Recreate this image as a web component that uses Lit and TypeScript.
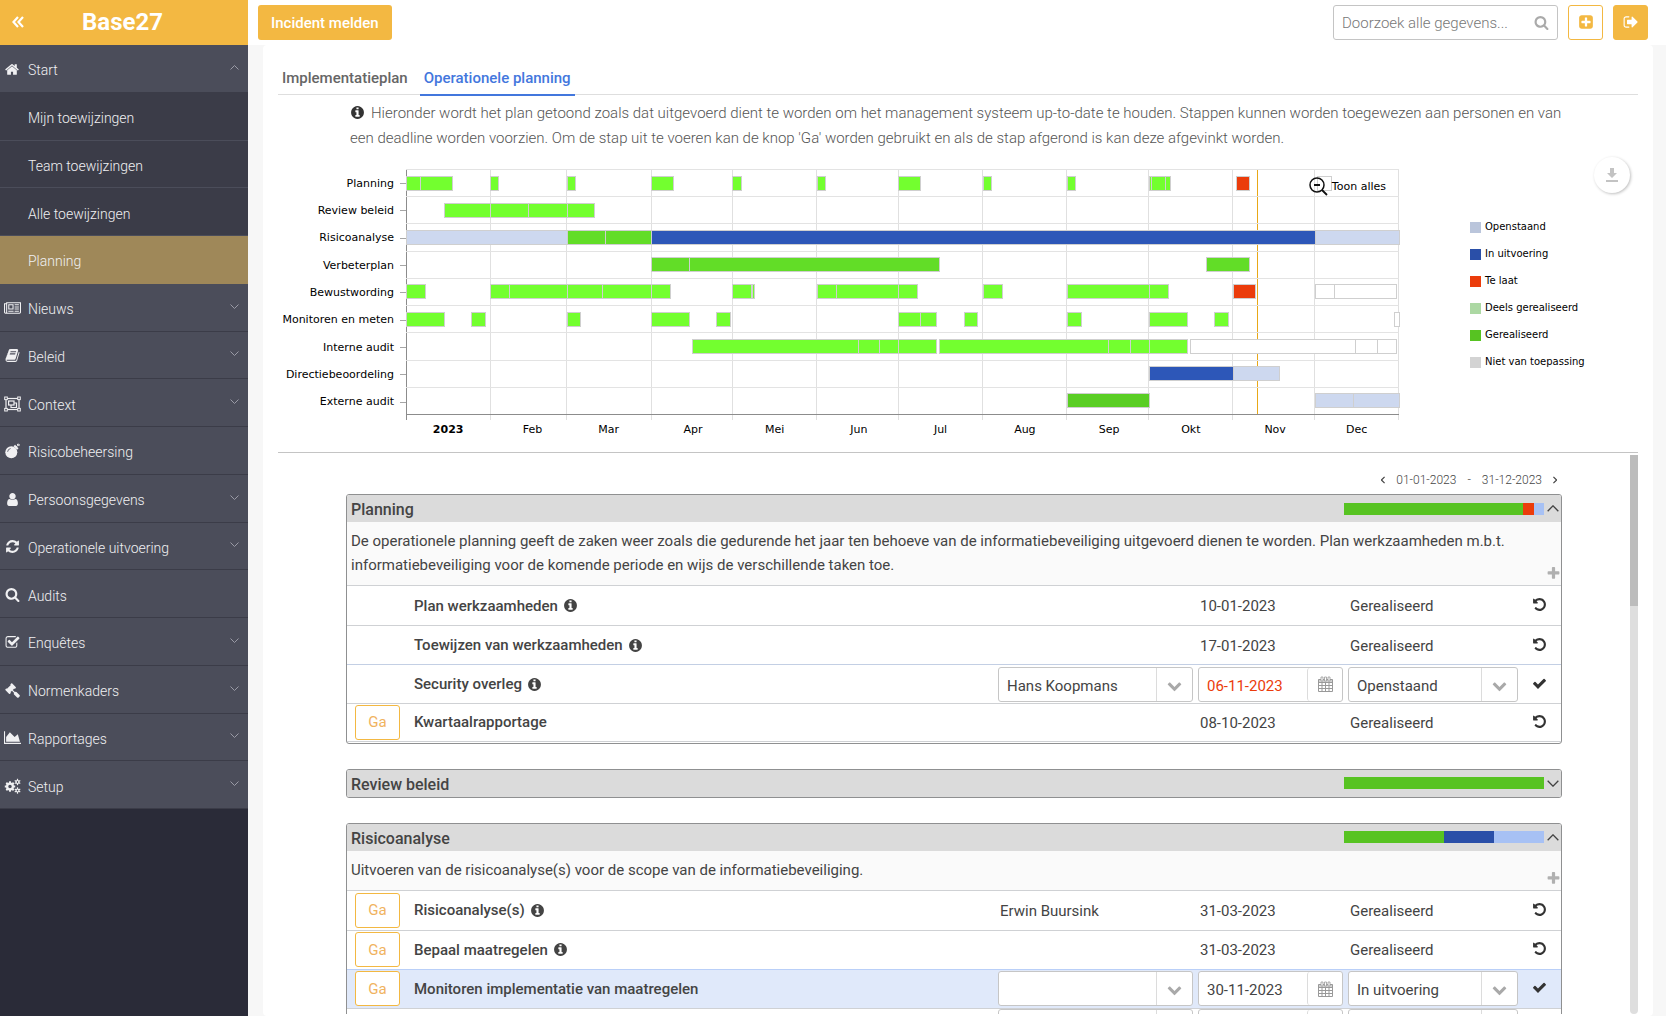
import { LitElement, html, css, svg, nothing } from "lit";
import { customElement, property } from "lit/decorators.js";
import { classMap } from "lit/directives/class-map.js";

/* ---------- icons: [viewBox width, path] on a 1792 high grid ---------- */
const ICONS: Record<string, [number, string]> = {
  home: [1664, "M1408 992v480q0 26-19 45t-45 19h-384v-384h-256v384h-384q-26 0-45-19t-19-45v-480q0-1 .5-3t.5-3l575-474 575 474q1 2 1 6zm223-69l-62 74q-8 9-21 11h-3q-13 0-21-7l-692-577-692 577q-12 8-24 7-13-2-21-11l-62-74q-8-10-7-23.5t11-21.5l719-599q32-26 76-26t76 26l244 204v-195q0-14 9-23t23-9h192q14 0 23 9t9 23v408l219 182q10 8 11 21.5t-7 23.5z"],
  news: [2048, "M1024 512h-384v384h384v-384zm128 640v128h-640v-128h640zm0-768v640h-640v-640h640zm640 768v128h-512v-128h512zm0-256v128h-512v-128h512zm0-256v128h-512v-128h512zm0-256v128h-512v-128h512zm-1536 960v-960h-128v960q0 26 19 45t45 19 45-19 19-45zm1664 0v-1088h-1536v1088q0 33-11 64h1483q26 0 45-19t19-45zm128-1216v1216q0 80-56 136t-136 56h-1664q-80 0-136-56t-56-136v-1088h256v-128h1792z"],
  book: [1792, "M1703 478q40 57 18 129l-275 906q-19 64-76.5 107.5t-122.5 43.5h-923q-77 0-148.5-53.5t-99.5-131.5q-24-67-2-127 0-4 3-27t4-37q1-8-3-21.5t-3-19.5q2-11 8-21t16.5-23.5 16.5-23.5q23-38 45-91.5t30-91.5q3-10 .5-30t-.5-28q3-11 17-28t17-23q21-36 42-92t25-90q1-9-2.5-32t.5-28q4-13 22-30.5t22-22.5q19-26 42.5-84.5t27.5-96.5q1-8-3-25.5t-2-26.5q2-8 9-18t18-23 17-21q8-12 16.5-30.5t15-35 16-36 19.5-32 26.5-23.5 36-11.5 47.5 5.5l-1 3q38-9 51-9h761q74 0 114 56t18 130l-274 906q-36 119-71.5 153.5t-128.5 34.5h-869q-27 0-38 15-11 16-1 43 24 70 144 70h923q29 0 56-15.5t35-41.5l300-987q7-22 5-57 38 15 59 43zm-1064 2q-4 13 2 22.5t20 9.5h608q13 0 25.5-9.5t16.5-22.5l21-64q4-13-2-22.5t-20-9.5h-608q-13 0-25.5 9.5t-16.5 22.5zm-83 256q-4 13 2 22.5t20 9.5h608q13 0 25.5-9.5t16.5-22.5l21-64q4-13-2-22.5t-20-9.5h-608q-13 0-25.5 9.5t-16.5 22.5z"],
  user: [1792, "M1536 1399q0 109-62.5 187t-150.5 78h-854q-88 0-150.5-78t-62.5-187q0-85 8.5-160.5t31.5-152 58.5-131 94-89 134.5-34.5q131 128 313 128t313-128q76 0 134.5 34.5t94 89 58.5 131 31.5 152 8.5 160.5zm-256-887q0 159-112.5 271.5t-271.5 112.5-271.5-112.5-112.5-271.5 112.5-271.5 271.5-112.5 271.5 112.5 112.5 271.5z"],
  refresh: [1792, "M1639 1056q0 5-1 7-64 268-268 434.5t-478 166.5q-146 0-282.5-55t-243.5-157l-129 129q-19 19-45 19t-45-19-19-45v-448q0-26 19-45t45-19h448q26 0 45 19t19 45-19 45l-137 137q71 66 161 102t187 36q134 0 250-65t186-179q11-17 53-117 8-23 30-23h192q13 0 22.5 9.5t9.5 22.5zm25-800v448q0 26-19 45t-45 19h-448q-26 0-45-19t-19-45 19-45l138-138q-148-137-349-137-134 0-250 65t-186 179q-11 17-53 117-8 23-30 23h-199q-13 0-22.5-9.5t-9.5-22.5v-7q65-268 270-434.5t480-166.5q146 0 284 55.5t245 156.5l130-129q19-19 45-19t45 19 19 45z"],
  search: [1792, "M1216 832q0-185-131.5-316.5t-316.5-131.5-316.5 131.5-131.5 316.5 131.5 316.5 316.5 131.5 316.5-131.5 131.5-316.5zm512 832q0 52-38 90t-90 38q-54 0-90-38l-343-342q-179 124-399 124-143 0-273.5-55.5t-225-150-150-225-55.5-273.5 55.5-273.5 150-225 225-150 273.5-55.5 273.5 55.5 225 150 150 225 55.5 273.5q0 220-124 399l343 343q37 37 37 90z"],
  survey: [1792, "M1472 930v318q0 119-84.5 203.5t-203.5 84.5h-832q-119 0-203.5-84.5t-84.5-203.5v-832q0-119 84.5-203.5t203.5-84.5h832q63 0 117 25 15 7 18 23 3 17-9 29l-49 49q-10 10-23 10-3 0-9-2-23-6-45-6h-832q-66 0-113 47t-47 113v832q0 66 47 113t113 47h832q66 0 113-47t47-113v-254q0-13 9-22l64-64q10-10 23-10 6 0 12 3 20 8 20 29zm231-489l-814 814q-24 24-57 24t-57-24l-430-430q-24-24-24-57t24-57l110-110q24-24 57-24t57 24l263 263 647-647q24-24 57-24t57 24l110 110q24 24 24 57t-24 57z"],
  gavel: [1792, "M1771 1536q0 53-37 90l-107 108q-39 37-91 37-53 0-90-37l-363-364q-38-36-38-90 0-53 43-96l-256-256-126 126q-14 14-34 14t-34-14q2 2 12.5 12t12.5 13 10 11.5 10 13.5 6 13.5 5.5 16.5 1.5 18q0 38-28 68-3 3-16.5 18t-19 20.5-18.5 16.5-22 15.5-22 9-26 4.5q-40 0-68-28l-408-408q-28-28-28-68 0-13 4.5-26t9-22 15.5-22 16.5-18.5 20.5-19 18-16.5q30-28 68-28 10 0 18 1.5t16.5 5.5 13.5 6 13.5 10 11.5 10 13 12.5 12 12.5q-14-14-14-34t14-34l348-348q14-14 34-14t34 14q-2-2-12.5-12t-12.5-13-10-11.5-10-13.5-6-13.5-5.5-16.5-1.5-18q0-38 28-68 3-3 16.5-18t19-20.5 18.5-16.5 22-15.5 22-9 26-4.5q40 0 68 28l408 408q28 28 28 68 0 13-4.5 26t-9 22-15.5 22-16.5 18.5-20.5 19-18 16.5q-30 28-68 28-10 0-18-1.5t-16.5-5.5-13.5-6-13.5-10-11.5-10-13-12.5-12-12.5q14 14 14 34t-14 34l-126 126 256 256q43-43 96-43 52 0 91 37l363 363q37 39 37 91z"],
  area: [2048, "M2048 1536v128h-2048v-1536h128v1408h1920zm-384-1024l256 896h-1664v-576l448-576 576 576z"],
  info: [1792, "M1152 1376v-160q0-14-9-23t-23-9h-96v-512q0-14-9-23t-23-9h-320q-14 0-23 9t-9 23v160q0 14 9 23t23 9h96v320h-96q-14 0-23 9t-9 23v160q0 14 9 23t23 9h448q14 0 23-9t9-23zm-128-896v-160q0-14-9-23t-23-9h-192q-14 0-23 9t-9 23v160q0 14 9 23t23 9h192q14 0 23-9t9-23zm640 416q0 209-103 385.5t-279.5 279.5-385.5 103-385.5-103-279.5-279.5-103-385.5 103-385.5 279.5-279.5 385.5-103 385.5 103 279.5 279.5 103 385.5z"],
  plusSquare: [1792, "M1408 960v-128q0-26-19-45t-45-19h-320v-320q0-26-19-45t-45-19h-128q-26 0-45 19t-19 45v320h-320q-26 0-45 19t-19 45v128q0 26 19 45t45 19h320v320q0 26 19 45t45 19h128q26 0 45-19t19-45v-320h320q26 0 45-19t19-45zm256-544v960q0 119-84.5 203.5t-203.5 84.5h-960q-119 0-203.5-84.5t-84.5-203.5v-960q0-119 84.5-203.5t203.5-84.5h960q119 0 203.5 84.5t84.5 203.5z"],
  signOut: [1792, "M704 1440q0 4 1 20t.5 26.5-3 23.5-10 19.5-20.5 6.5h-320q-119 0-203.5-84.5t-84.5-203.5v-704q0-119 84.5-203.5t203.5-84.5h320q13 0 22.5 9.5t9.5 22.5q0 4 1 20t.5 26.5-3 23.5-10 19.5-20.5 6.5h-320q-66 0-113 47t-47 113v704q0 66 47 113t113 47h312l11.5 1 11.5 3 8 5.5 7 9 2 13.5zm928-544q0 26-19 45l-544 544q-19 19-45 19t-45-19-19-45v-288h-448q-26 0-45-19t-19-45v-384q0-26 19-45t45-19h448v-288q0-26 19-45t45-19 45 19l544 544q19 19 19 45z"],
  plus: [1792, "M1600 736v192q0 40-28 68t-68 28h-416v416q0 40-28 68t-68 28h-192q-40 0-68-28t-28-68v-416h-416q-40 0-68-28t-28-68v-192q0-40 28-68t68-28h416v-416q0-40 28-68t68-28h192q40 0 68 28t28 68v416h416q40 0 68 28t28 68z"],
  check: [1792, "M1671 566q0 40-28 68l-724 724-136 136q-28 28-68 28t-68-28l-136-136-362-362q-28-28-28-68t28-68l136-136q28-28 68-28t68 28l294 295 656-657q28-28 68-28t68 28l136 136q28 28 28 68z"],
  chevron: [1792, "M1683 808l-742 741q-19 19-45 19t-45-19l-742-741q-19-19-19-45.5t19-45.5l166-165q19-19 45-19t45 19l531 531 531-531q19-19 45-19t45 19l166 165q19 19 19 45.5t-19 45.5z"],
  undo: [1792, "M1664 896q0 156-61 298t-164 245-245 164-298 61q-172 0-327-72.5t-264-204.5q-7-10-6.5-22.5t8.5-20.5l137-138q10-9 25-9 16 2 23 12 73 95 179 147t225 52q104 0 198.5-40.5t163.5-109.5 109.5-163.5 40.5-198.5-40.5-198.5-109.5-163.5-163.5-109.5-198.5-40.5q-98 0-188 35.5t-160 101.5l137 138q31 30 14 69-17 40-59 40h-448q-26 0-45-19t-19-45v-448q0-42 40-59 39-17 69 14l130 129q107-101 244.5-156.5t284.5-55.5q156 0 298 61t245 164 164 245 61 298z"],
};

const gear = (cx: number, cy: number, r: number, teeth: number, tooth: number) => svg`
  ${Array.from({ length: teeth }, (_, i) => svg`<rect x=${cx - tooth / 2} y=${cy - r - 1.2} width=${tooth} height="2" fill="currentColor" transform="rotate(${(360 / teeth) * i} ${cx} ${cy})"></rect>`)}
  <circle cx=${cx} cy=${cy} r=${r * 0.72} fill="none" stroke="currentColor" stroke-width=${r * 0.56}></circle>`;

const DRAWN: Record<string, unknown> = {
  group: svg`<g fill="none" stroke="currentColor" stroke-width="1.200"><rect x="2" y="2.500" width="13" height="11"></rect><rect x="4.600" y="5" width="5.400" height="4"></rect><path d="M10 7h2.500v4.500H7V9"></path></g>
    <g fill="#4b4d5a" stroke="currentColor" stroke-width="1"><rect x=".7" y="1" width="2.600" height="2.600"></rect><rect x="13.700" y="1" width="2.600" height="2.600"></rect><rect x=".7" y="12.400" width="2.600" height="2.600"></rect><rect x="13.700" y="12.400" width="2.600" height="2.600"></rect></g>`,
  bomb: svg`<circle cx="7.300" cy="9.200" r="6" fill="currentColor"></circle><path d="M9.500 3.200l3.600 3.600 1.400-1.600-3.400-3.400z" fill="currentColor"></path><path d="M12 4.400l1.800-2.200M14.200.6v1.600M15.600 2.600h-1.400M13 1l1 1M15.600 1.200l-1 1" stroke="currentColor" stroke-width=".9" fill="none"></path><path d="M3.600 8.800a3.800 3.800 0 0 1 3-3.300" stroke="#4b4d5a" stroke-width=".8" fill="none"></path>`,
  cogs: svg`${gear(6, 8.5, 4, 8, 2)}${gear(13.5, 4, 2, 6, 1.2)}${gear(13.5, 12.5, 2, 6, 1.2)}`,
  calendar: svg`<g fill="none" stroke="currentColor" stroke-width="1"><path d="M1.500 3.500h14v12h-14zM1.500 6.500h14M1.500 9.500h14M1.500 12.500h14M5 6.500v9M8.500 6.500v9M12 6.500v9"></path></g><path d="M1.500 3.500h14v2.500h-14z" fill="currentColor" opacity=".45"></path><path d="M4 1h2v4H4zM7.500 1h2v4h-2zM11 1h2v4h-2z" fill="#fff" stroke="currentColor" stroke-width=".8"></path>`,
};

const icon = (name: string, size = 15) => {
  if (DRAWN[name]) {
    return html`<svg class="icon" width="17" height="16" viewBox="0 0 17 16" aria-hidden="true">${DRAWN[name]}</svg>`;
  }
  const [w, d] = ICONS[name];
  return html`<svg class="icon" width=${Math.round((size * w) / 1792)} height=${size} viewBox="0 0 ${w} 1792" aria-hidden="true"><path fill="currentColor" d=${d}></path></svg>`;
};

const caret = (dir: "up" | "down" | "left" | "right", w: number, h: number, stroke: number) => {
  const d = { up: "M1 9L9 1L17 9", down: "M1 1L9 9L17 1", left: "M9 1L1 9L9 17", right: "M1 1L9 9L1 17" }[dir];
  const flat = dir === "up" || dir === "down";
  return html`<svg class="icon" width=${w} height=${h} viewBox=${flat ? "0 0 18 10" : "0 0 10 18"} aria-hidden="true"><path d=${d} fill="none" stroke="currentColor" stroke-width=${stroke}></path></svg>`;
};

const shared = css`
  *, *::before, *::after { box-sizing: border-box; }
  button, input, select { font: inherit; color: inherit; margin: 0; padding: 0; border: 0; background: none; }
  button { cursor: pointer; }
  a { color: inherit; text-decoration: none; }
  .icon { display: block; flex: none; }
`;

/* ---------- data ---------- */
interface NavItem { label: string; icon?: string; arrow?: "up" | "down"; sub?: boolean; active?: boolean; }
const NAV: NavItem[] = [
  { label: "Start", icon: "home", arrow: "up" },
  { label: "Mijn toewijzingen", sub: true },
  { label: "Team toewijzingen", sub: true },
  { label: "Alle toewijzingen", sub: true },
  { label: "Planning", sub: true, active: true },
  { label: "Nieuws", icon: "news", arrow: "down" },
  { label: "Beleid", icon: "book", arrow: "down" },
  { label: "Context", icon: "group", arrow: "down" },
  { label: "Risicobeheersing", icon: "bomb" },
  { label: "Persoonsgegevens", icon: "user", arrow: "down" },
  { label: "Operationele uitvoering", icon: "refresh", arrow: "down" },
  { label: "Audits", icon: "search" },
  { label: "Enquêtes", icon: "survey", arrow: "down" },
  { label: "Normenkaders", icon: "gavel", arrow: "down" },
  { label: "Rapportages", icon: "area", arrow: "down" },
  { label: "Setup", icon: "cogs", arrow: "down" },
];

/* Bars are [first day, last day, kind], counted in days from 1 January. */
type Bar = [number, number, string];
const run = (kind: string, ...days: number[]): Bar[] => days.slice(1).map((d, i) => [days[i], d, kind] as Bar);
const CHART: { label: string; bars: Bar[] }[] = [
  { label: "Planning", bars: [...run("lime", 0, 5, 17), ...run("lime", 31, 34), ...run("lime", 59, 62), ...run("lime", 90, 98), ...run("lime", 120, 123), ...run("lime", 151, 154), ...run("lime", 181, 189), ...run("lime", 212, 215), ...run("lime", 243, 246), ...run("lime", 273, 274, 279, 281), ...run("late", 305, 310), ...run("empty", 335, 340)] },
  { label: "Review beleid", bars: run("lime", 14, 31, 45, 59, 69) },
  { label: "Risicoanalyse", bars: [...run("open", 0, 59), ...run("green", 59, 73, 90), ...run("busy", 90, 334), ...run("open", 334, 365)] },
  { label: "Verbeterplan", bars: [...run("green", 90, 104, 196), ...run("green", 294, 310)] },
  { label: "Bewustwording", bars: [...run("lime", 0, 7), ...run("lime", 31, 38, 59, 72, 90, 97), ...run("lime", 120, 127, 128), ...run("lime", 151, 158, 181, 188), ...run("lime", 212, 219), ...run("lime", 243, 273, 280), ...run("late", 304, 312), ...run("empty", 334, 341, 364)] },
  { label: "Monitoren en meten", bars: [...run("lime", 0, 14), ...run("lime", 24, 29), ...run("lime", 59, 64), ...run("lime", 90, 104), ...run("lime", 114, 119), ...run("lime", 181, 189, 195), ...run("lime", 205, 210), ...run("lime", 243, 248), ...run("lime", 273, 287), ...run("lime", 297, 302), ...run("empty", 363, 365)] },
  { label: "Interne audit", bars: [...run("lime", 105, 166, 174, 181, 195), ...run("lime", 196, 258, 266, 273, 287), ...run("empty", 288, 349, 357, 364)] },
  { label: "Directiebeoordeling", bars: [...run("busy", 273, 304), ...run("open", 304, 321)] },
  { label: "Externe audit", bars: [...run("done", 243, 273), ...run("open", 334, 348, 365)] },
];
const MONTHS: [string, number][] = [["2023", 31], ["Feb", 28], ["Mar", 31], ["Apr", 30], ["Mei", 31], ["Jun", 30], ["Jul", 31], ["Aug", 31], ["Sep", 30], ["Okt", 31], ["Nov", 30], ["Dec", 31]];
const LEGEND: [string, string][] = [["Openstaand", "l-open"], ["In uitvoering", "l-busy"], ["Te laat", "l-late"], ["Deels gerealiseerd", "l-part"], ["Gerealiseerd", "l-done"], ["Niet van toepassing", "l-none"]];
const pct = (days: number, of = 365) => `${(days / of) * 100}%`;

interface Task { title: string; go?: boolean; info?: boolean; who?: string; date: string; status: string; edit?: boolean; late?: boolean; tone?: string; }
interface Section { title: string; open: boolean; progress: [string, number][]; text?: string; tasks?: Task[]; }
const SECTIONS: Section[] = [
  {
    title: "Planning", open: true, progress: [["done", 179], ["late", 11], ["soft", 10]],
    text: "De operationele planning geeft de zaken weer zoals die gedurende het jaar ten behoeve van de informatiebeveiliging uitgevoerd dienen te worden. Plan werkzaamheden m.b.t. informatiebeveiliging voor de komende periode en wijs de verschillende taken toe.",
    tasks: [
      { title: "Plan werkzaamheden", info: true, date: "10-01-2023", status: "Gerealiseerd" },
      { title: "Toewijzen van werkzaamheden", info: true, date: "17-01-2023", status: "Gerealiseerd" },
      { title: "Security overleg", info: true, who: "Hans Koopmans", date: "06-11-2023", status: "Openstaand", edit: true, late: true, tone: "focus" },
      { title: "Kwartaalrapportage", go: true, date: "08-10-2023", status: "Gerealiseerd" },
    ],
  },
  { title: "Review beleid", open: false, progress: [["done", 200]] },
  {
    title: "Risicoanalyse", open: true, progress: [["done", 100], ["busy", 50], ["soft", 50]],
    text: "Uitvoeren van de risicoanalyse(s) voor de scope van de informatiebeveiliging.",
    tasks: [
      { title: "Risicoanalyse(s)", go: true, info: true, who: "Erwin Buursink", date: "31-03-2023", status: "Gerealiseerd" },
      { title: "Bepaal maatregelen", go: true, info: true, date: "31-03-2023", status: "Gerealiseerd" },
      { title: "Monitoren implementatie van maatregelen", go: true, date: "30-11-2023", status: "In uitvoering", edit: true, tone: "active" },
      { title: "", date: "", status: "", edit: true },
    ],
  },
];

/* ---------- sidebar ---------- */
@customElement("side-nav")
export class SideNav extends LitElement {
  static styles = [shared, css`
    :host { display: flex; flex-direction: column; background: #2a2b38; color: #f0f0f2; }
    .brand { height: 45px; display: flex; align-items: center; gap: 58px; padding: 0 12px 2px; background: #f3b842; color: #fff; }
    .brand button { width: 12px; display: flex; }
    .name { flex: none; font-size: 24px; line-height: 28px; font-weight: 700; margin: 0; }
    .list { list-style: none; margin: 0; padding: 0; display: grid; grid-auto-rows: 1fr; min-height: 764px; }
    .item { display: flex; background: #4b4d5a; border-bottom: 1px solid #3b3c48; }
    .item.sub { background: #3b3c48; border-bottom-color: #4b4d5a; }
    .item.active { background: #9f8859; border-bottom-color: #9f8859; }
    .link { flex: 1; display: grid; grid-template-columns: 24px 1fr 12px; gap: 4px; align-items: center; padding: 2px 8px 0 0; font-size: 14px; font-weight: 300; line-height: 20px; }
    .glyph { display: flex; justify-content: center; }
    .arrow { color: #9a9ba6; display: flex; justify-content: center; padding-bottom: 4px; }
    .text { padding-top: 2px; }
  `];
  render() {
    return html`
      <div class="brand">
        <button aria-label="Menu inklappen"><svg class="icon" width="12" height="12" viewBox="0 0 12 12"><path d="M6 1L1.500 6L6 11M11 1L6.500 6L11 11" fill="none" stroke="#fff" stroke-width="2.200"></path></svg></button>
        <h1 class="name">Base27</h1>
      </div>
      <nav aria-label="Hoofdmenu">
        <ul class="list">
          ${NAV.map((n) => html`<li class=${classMap({ item: true, sub: !!n.sub, active: !!n.active })}>
            <a class="link" href="#">
              <span class="glyph">${n.icon ? icon(n.icon, 15) : nothing}</span>
              <span class="text">${n.label}</span>
              <span class="arrow">${n.arrow ? caret(n.arrow, 9, 5, 2) : nothing}</span>
            </a></li>`)}
        </ul>
      </nav>`;
  }
}

/* ---------- year chart ---------- */
@customElement("year-chart")
export class YearChart extends LitElement {
  static styles = [shared, css`
    :host { display: grid; grid-template-columns: 1fr 71px 168px; font: 11px/14px Verdana, "DejaVu Sans", sans-serif; color: #000; }
    .chart { display: grid; grid-template-columns: 128px 1fr; }
    .labels, .rows { display: grid; grid-auto-rows: 1fr; height: 246px; }
    .label { display: flex; align-items: center; justify-content: flex-end; gap: 6px; padding-top: 2px; white-space: nowrap; }
    .label::after { content: ""; width: 6px; height: 1px; background: #a6a6a6; }
    .plot { position: relative; }
    .rows { position: relative; border-bottom: 1px solid #8c8c8c; }
    .row { position: relative; display: flex; align-items: center; border-top: 1px solid #e3e3e3; }
    .bar { position: absolute; height: 15px; border: 1px solid #cfcfcf; }
    .lime { background: #73ff2f; }
    .green { background: #62dd27; }
    .done { background: #5ace24; }
    .busy { background: #2d57b8; }
    .open { background: #cdd8ef; }
    .late { background: #eb3c0b; }
    .empty { background: #fff; }
    .grid { position: absolute; top: 0; left: 0; right: 0; height: 251px; display: flex; border-left: 1px solid #8c8c8c; }
    .month { border-right: 1px solid rgba(0, 0, 0, 0.12); }
    .today { position: absolute; top: 0; height: 245px; width: 1px; background: #e8a817; }
    .months { display: flex; padding-top: 8px; }
    .name { flex: none; }
    .name span { display: block; text-align: center; }
    .name:first-child { font-weight: 700; }
    .zoomout { position: absolute; top: 8px; right: 13px; display: flex; align-items: center; gap: 4px; }
    .side { display: flex; flex-direction: column; gap: 13px; margin: 51px 0 0; padding: 0; list-style: none; font-size: 10px; }
    .side li { display: flex; align-items: center; gap: 4px; line-height: 14px; }
    .swatch { width: 11px; height: 11px; }
    .l-open { background: #bac5db; }
    .l-busy { background: #2a4fa8; }
    .l-late { background: #eb3c0b; }
    .l-part { background: #acd8a3; }
    .l-done { background: #57c322; }
    .l-none { background: #d3d3d3; }
  `];
  render() {
    return html`
      <div class="chart">
        <div class="labels">${CHART.map((r) => html`<div class="label">${r.label}</div>`)}</div>
        <div class="plot">
          <div class="grid">${MONTHS.map(([, d]) => html`<div class="month" style="width:${pct(d)}"></div>`)}</div>
          <div class="today" style="left:${pct(312.8)}"></div>
          <div class="rows">${CHART.map((r) => html`<div class="row">${r.bars.map(([a, b, k]) => html`<div class="bar ${k}" style="left:${pct(a)};width:calc(${pct(b - a)} + 1px)"></div>`)}</div>`)}</div>
          <button class="zoomout"><svg class="icon" width="19" height="19" viewBox="0 0 19 19" aria-hidden="true"><circle cx="8" cy="8" r="7" fill="none" stroke="#111" stroke-width="1.500"></circle><path d="M5 8h6M13 13l5 5" stroke="#111" stroke-width="1.800" fill="none"></path></svg>Toon alles</button>
          <div class="months">${MONTHS.map(([m, d]) => html`<div class="name" style="width:${pct(d)}"><span style="width:${pct(31, d)}">${m}</span></div>`)}</div>
        </div>
      </div>
      <div></div>
      <ul class="side">${LEGEND.map(([t, c]) => html`<li><span class="swatch ${c}"></span>${t}</li>`)}</ul>`;
  }
}

/* ---------- one planning section ---------- */
@customElement("plan-section")
export class PlanSection extends LitElement {
  @property({ attribute: false }) data!: Section;
  static styles = [shared, css`
    :host { display: block; border: 1px solid #8f9091; border-radius: 3px; color: #444; font-size: 15px; line-height: 24px; overflow: hidden; }
    .head { height: 27px; display: flex; align-items: center; gap: 2px; padding: 0 1px 0 4px; background: #dbdbdb; }
    .title { flex: 1; margin: 0; padding-top: 2px; font-size: 16px; font-weight: 500; line-height: 25px; }
    .progress { width: 200px; height: 12px; display: flex; }
    .p-done { background: #57c322; }
    .p-late { background: #eb3c0b; }
    .p-busy { background: #2a4fa8; }
    .p-soft { background: #a7c1f4; }
    .toggle { width: 14px; height: 20px; display: flex; align-items: center; justify-content: center; }
    .intro { display: flex; justify-content: space-between; align-items: flex-end; background: #fafafa; padding: 7px 0 4px 4px; }
    .copy { margin: 0 30px 4px 0; }
    .add { color: #b0b0b0; display: flex; }
    .tasks { width: 100%; border-collapse: collapse; table-layout: fixed; }
    .tasks td { padding: 0; height: 39px; border-top: 1px solid #cfd1d4; vertical-align: middle; }
    .c-go { width: 67px; }
    .c-who { width: 200px; }
    .c-date { width: 150px; }
    .c-state { width: 176px; }
    .c-act { width: 37px; }
    .tasks tr:first-child td { height: 40px; }
    .tasks tr:last-child td { height: 37px; }
    .tasks .focus td { border-color: #c3cfe4; }
    .tasks .active td { background: #e0e9fa; border-color: #b9cff8; }
    .go { display: block; width: 45px; height: 35px; margin-left: 8px; border: 1px solid #f3b842; border-radius: 3px; background: #fff; color: #f0b35f; }
    .what { display: flex; align-items: center; gap: 5px; font-weight: 500; }
    .value { padding: 1px 0 0 2px; }
    .field { display: flex; position: relative; height: 35px; border: 1px solid #c6c6c6; border-radius: 3px; background: #fff; }
    .f-who { width: 195px; }
    .f-date { width: 145px; }
    .f-state { width: 170px; }
    .field select, .field input { flex: 1; min-width: 0; width: 100%; appearance: none; padding: 3px 0 0 8px; outline: none; }
    .field .late { color: #eb3c0b; }
    .drop { position: absolute; right: 0; top: 0; bottom: 0; width: 36px; border-left: 1px solid #dcdcdc; display: flex; align-items: center; justify-content: center; color: #a9a9a9; pointer-events: none; padding-top: 2px; }
    .pick { width: 35px; border-left: 1px solid #dcdcdc; display: flex; align-items: center; justify-content: center; color: #999; border-radius: 3px; }
    .act { display: flex; justify-content: center; width: 24px; margin-left: 3px; color: #333; padding-bottom: 2px; }
    .end { height: 2px; border-top: 1px solid #cfd1d4; }
  `];
  private row(t: Task) {
    return html`<tr class=${t.tone ?? ""}>
      <td>${t.go ? html`<button class="go">Ga</button>` : nothing}</td>
      <td><div class="what">${t.title}${t.info ? icon("info", 15) : nothing}</div></td>
      ${t.edit ? html`
        <td><div class="field f-who"><select aria-label="Toegewezen aan"><option>${t.who ?? ""}</option></select><span class="drop">${icon("chevron", 15)}</span></div></td>
        <td><div class="field f-date"><input class=${t.late ? "late" : ""} aria-label="Deadline" type="text" .value=${t.date}><button class="pick" aria-label="Kies datum">${icon("calendar")}</button></div></td>
        <td><div class="field f-state"><select aria-label="Status"><option>${t.status}</option></select><span class="drop">${icon("chevron", 15)}</span></div></td>
        <td><button class="act" aria-label="Afvinken">${icon("check", 15)}</button></td>` : html`
        <td><div class="value">${t.who ?? ""}</div></td>
        <td><div class="value">${t.date}</div></td>
        <td><div class="value">${t.status}</div></td>
        <td><button class="act" aria-label="Heropenen">${icon("undo", 15)}</button></td>`}
    </tr>`;
  }
  render() {
    const s = this.data;
    return html`
      <div class="head">
        <h2 class="title">${s.title}</h2>
        <div class="progress">${s.progress.map(([k, w]) => html`<span class="p-${k}" style="width:${w / 2}%"></span>`)}</div>
        <button class="toggle" aria-label="${s.title} in- of uitklappen">${caret(s.open ? "up" : "down", 12, 7, 2)}</button>
      </div>
      ${s.open ? html`
        <div class="intro"><p class="copy">${s.text}</p><button class="add" aria-label="Stap toevoegen">${icon("plus", 15)}</button></div>
        <table class="tasks">
          <colgroup><col class="c-go"><col><col class="c-who"><col class="c-date"><col class="c-state"><col class="c-act"></colgroup>
          <tbody>${s.tasks!.map((t) => this.row(t))}</tbody>
        </table>
        <div class="end"></div>` : nothing}`;
  }
}

/* ---------- page ---------- */
@customElement("app-root")
export class AppRoot extends LitElement {
  static styles = [shared, css`
    :host { display: grid; grid-template-columns: 248px minmax(0, 1fr); height: 100vh; overflow: hidden; background: #f7f7f7; font-family: Roboto, "Liberation Sans", sans-serif; font-size: 15px; color: #444; }
    .page { display: flex; flex-direction: column; min-height: 0; }
    .top { height: 45px; display: flex; align-items: center; gap: 10px; padding: 0 18px 0 10px; background: #fff; }
    .report { height: 35px; padding: 0 13px; border-radius: 3px; background: #f3b842; color: #fff; font-weight: 500; margin-right: auto; }
    .search { width: 225px; height: 35px; display: flex; align-items: center; border: 1px solid #c4c4c4; border-radius: 3px; padding: 0 8px; }
    .search input { flex: 1; min-width: 0; outline: none; font-weight: 300; }
    .search input::placeholder { color: #777; opacity: 1; }
    .search .icon { color: #aaa; }
    .tool { width: 35px; height: 35px; border: 1px solid #f3b842; border-radius: 3px; display: flex; align-items: center; justify-content: center; color: #f3b842; padding-bottom: 2px; }
    .tool.solid { background: #f3b842; color: #fff; }
    .card { flex: 1; min-height: 0; display: flex; flex-direction: column; margin: 0 13px 0 15px; padding: 19px 15px 2px; background: #fff; border-radius: 4px; }
    .tabs { display: flex; gap: 8px; border-bottom: 1px solid #dedede; font-weight: 500; height: 31px; }
    .tab { padding: 4px 4px 7px; line-height: 20px; height: 32px; color: #666; }
    .tab.on { color: #4377dd; border-bottom: 2px solid #4377dd; }
    .hint { margin: 6px 60px 0 72px; font-weight: 300; line-height: 25px; color: #555; }
    .hint .icon { display: inline-block; vertical-align: -2px; margin-right: 6px; color: #333; }
    .figure { position: relative; padding-top: 18px; height: 302px; border-bottom: 1px solid #c4c4c4; }
    .download { position: absolute; top: 6px; right: 8px; width: 36px; height: 36px; border-radius: 50%; background: #fff; box-shadow: 1px 1px 3px rgba(0, 0, 0, 0.25); display: flex; align-items: center; justify-content: center; color: #c3c3c3; }
    .body { flex: 1; min-height: 0; display: flex; padding-top: 2px; }
    .list { flex: 1; min-width: 0; overflow: hidden; padding: 13px 68px 0; display: flex; flex-direction: column; gap: 25px; }
    .list > * { flex: none; }
    .range { display: flex; justify-content: flex-end; align-items: center; gap: 11px; font-size: 12px; font-weight: 300; line-height: 24px; padding-right: 5px; margin-bottom: -23px; color: #444; }
    .range button { display: flex; }
    .track { width: 8px; background: #dedede; border-radius: 0 0 4px 4px; }
    .thumb { height: 27%; background: #bcbcbc; }
  `];
  render() {
    return html`
      <side-nav></side-nav>
      <div class="page">
        <header class="top">
          <button class="report">Incident melden</button>
          <div class="search"><input type="search" aria-label="Zoeken" placeholder="Doorzoek alle gegevens...">${icon("search", 15)}</div>
          <button class="tool" aria-label="Toevoegen">${icon("plusSquare", 16)}</button>
          <button class="tool solid" aria-label="Uitloggen">${icon("signOut", 16)}</button>
        </header>
        <main class="card">
          <nav class="tabs" aria-label="Weergave"><a class="tab" href="#">Implementatieplan</a><a class="tab on" href="#">Operationele planning</a></nav>
          <p class="hint">${icon("info", 15)}Hieronder wordt het plan getoond zoals dat uitgevoerd dient te worden om het management systeem up-to-date te houden. Stappen kunnen worden toegewezen aan personen en van een deadline worden voorzien. Om de stap uit te voeren kan de knop 'Ga' worden gebruikt en als de stap afgerond is kan deze afgevinkt worden.</p>
          <section class="figure">
            <year-chart></year-chart>
            <button class="download" aria-label="Downloaden"><svg class="icon" width="12" height="14" viewBox="0 0 12 14"><path d="M4 0h4v5h3L6 10L1 5h3zM0 12h12v2H0z" fill="currentColor"></path></svg></button>
          </section>
          <div class="body">
            <div class="list">
              <div class="range"><button aria-label="Vorige periode">${caret("left", 4, 8, 3)}</button><span>01-01-2023</span><span>-</span><span>31-12-2023</span><button aria-label="Volgende periode">${caret("right", 4, 8, 3)}</button></div>
              ${SECTIONS.map((s) => html`<plan-section .data=${s}></plan-section>`)}
            </div>
            <div class="track"><div class="thumb"></div></div>
          </div>
        </main>
      </div>`;
  }
}
